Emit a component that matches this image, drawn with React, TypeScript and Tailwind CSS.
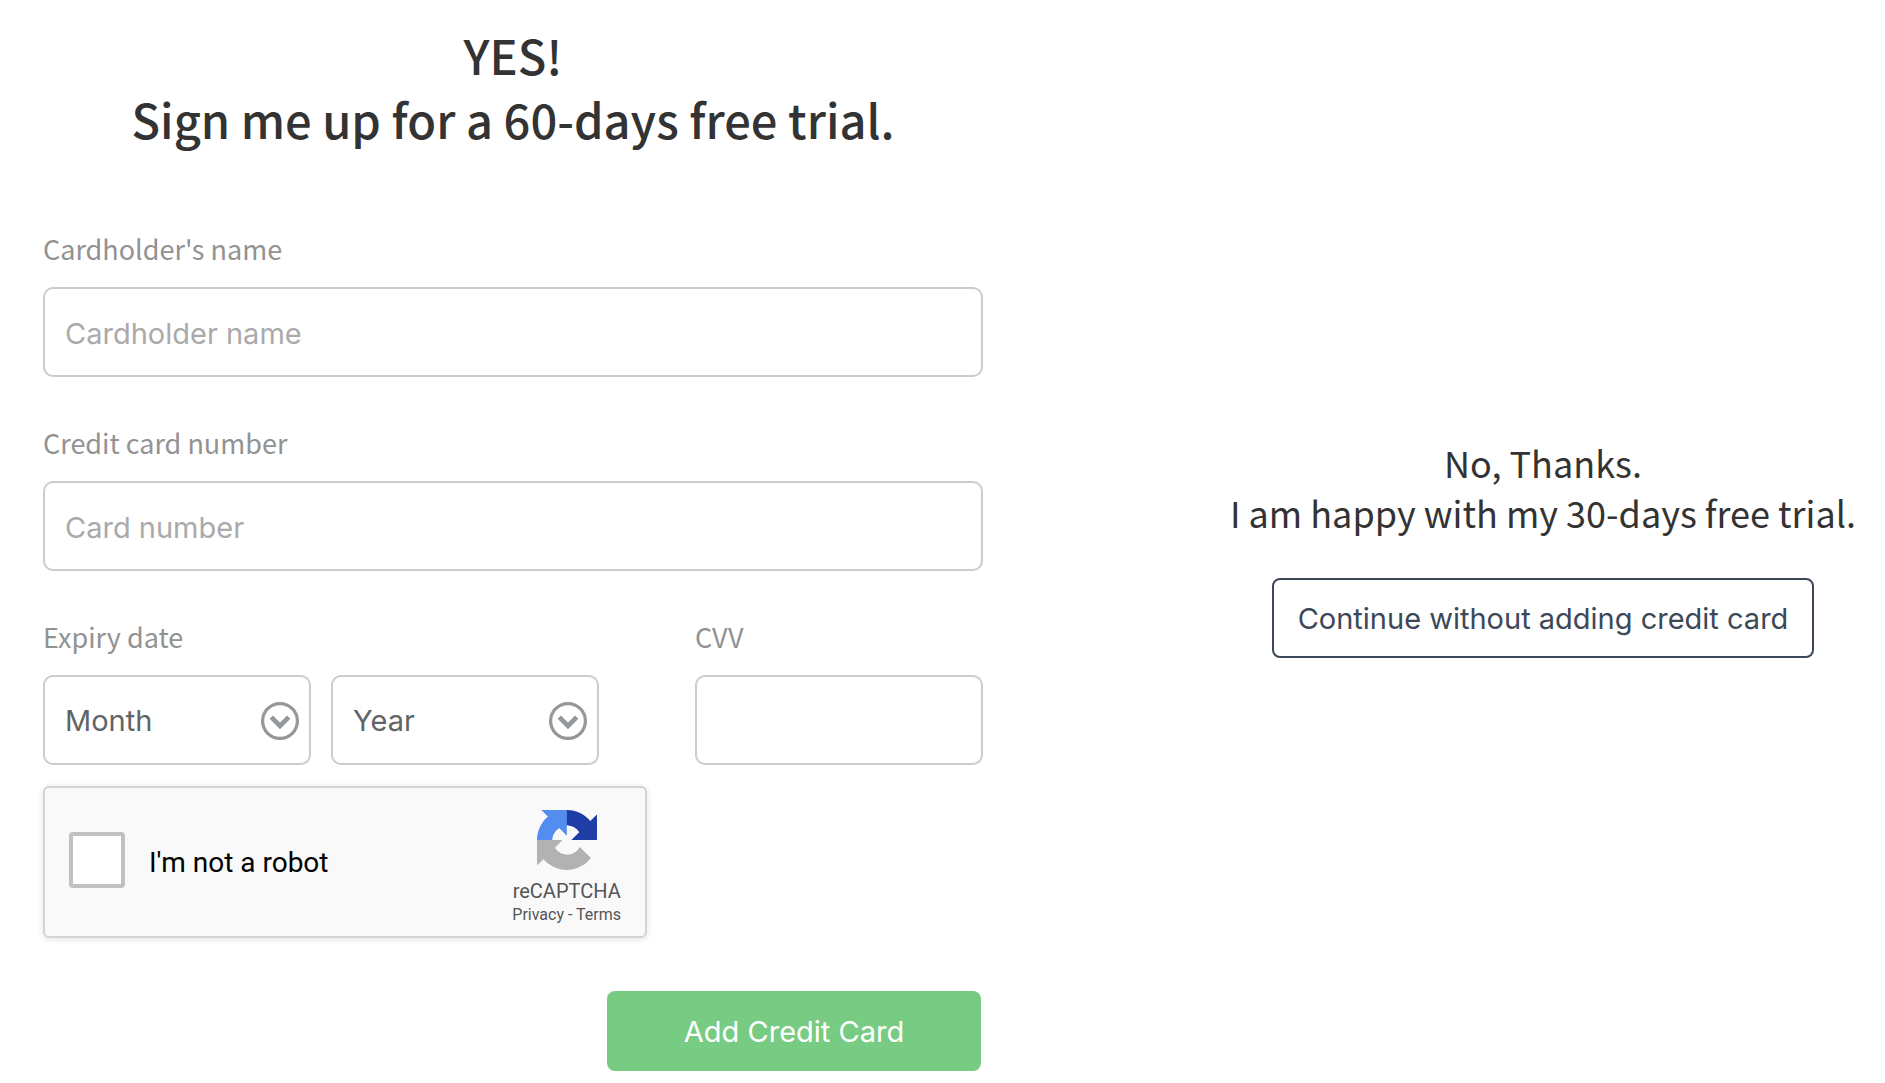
import type { ReactNode } from "react";

const humanist = "font-['Noto_Sans_CJK_SC',sans-serif]";
const fieldBox =
  "h-[90px] w-full rounded-[10px] border-2 border-[#cccccc] bg-white px-5 pt-0.5 text-[29px] outline-none placeholder:text-[#aaaaaa]";

function Field({ id, label, children }: { id: string; label: string; children: ReactNode }) {
  return (
    <div className="flex flex-col gap-[17px]">
      <label htmlFor={id} className={`${humanist} text-[27px] leading-[43px] text-[#929292]`}>
        {label}
      </label>
      {children}
    </div>
  );
}

function Dropdown({ id, label, options }: { id: string; label: string; options: string[] }) {
  return (
    <div className="relative flex-1">
      <select id={id} aria-label={label} className={`${fieldBox} appearance-none text-[#5f6467]`}>
        <option>{label}</option>
        {options.map((option) => (
          <option key={option}>{option}</option>
        ))}
      </select>
      <svg
        viewBox="0 0 38 38"
        className="pointer-events-none absolute top-[27px] right-3 size-[38px]"
        fill="none"
        stroke="#94989b"
        aria-hidden="true"
      >
        <circle cx="19" cy="19" r="17.4" strokeWidth="3.2" />
        <path d="M10.3 15.2 19 23.9l8.700-8.700" strokeWidth="4.600" />
      </svg>
    </div>
  );
}

function RecaptchaLogo() {
  return (
    <svg viewBox="0 0 64 64" className="size-[60px]" aria-hidden="true">
      <path
        fill="#1f3da6"
        d="M64 31.955l-.033-1.37V4.687l-7.16 7.16C50.948 4.674 42.033.093 32.05.093c-10.4 0-19.622 4.96-25.458 12.64l11.736 11.86a15.55 15.55 0 0 1 4.754-5.334c2.05-1.6 4.952-2.906 8.968-2.906.485 0 .86.057 1.135.163 4.976.393 9.288 3.14 11.828 7.124l-8.307 8.307L64 31.953"
      />
      <path
        fill="#548df0"
        d="M31.862.094l-1.37.033H4.594l7.16 7.16C4.58 13.147 0 22.06 0 32.046c0 10.4 4.96 19.622 12.64 25.458L24.5 45.768a15.55 15.55 0 0 1-5.334-4.754c-1.6-2.05-2.906-4.952-2.906-8.968 0-.485.057-.86.163-1.135.393-4.976 3.14-9.288 7.124-11.828l8.307 8.307L31.86.095"
      />
      <path
        fill="#b2b2b2"
        d="M.001 32.045l.033 1.37v25.898l7.16-7.16c5.86 7.173 14.774 11.754 24.76 11.754 10.4 0 19.622-4.96 25.458-12.64l-11.736-11.86a15.55 15.55 0 0 1-4.754 5.334c-2.05 1.6-4.952 2.906-8.968 2.906-.485 0-.86-.057-1.135-.163-4.976-.393-9.288-3.14-11.828-7.124l8.307-8.307c-10.522.04-22.4.066-27.295-.005"
      />
    </svg>
  );
}

function Recaptcha() {
  return (
    <div className="mt-[21px] flex h-[152px] w-[604px] items-center justify-between rounded-md border-2 border-[#d3d3d3] bg-[#f9f9f9] pr-6 pl-6 font-['Roboto',sans-serif] shadow-[0_1px_6px_rgba(0,0,0,0.12)]">
      <div className="flex items-center gap-6 pb-1">
        <input
          id="robot"
          type="checkbox"
          className="size-14 appearance-none rounded-[4px] border-4 border-[#c1c1c1] bg-white"
        />
        <label htmlFor="robot" className="pt-1.5 text-[28px] text-black">
          I'm not a robot
        </label>
      </div>
      <div className="flex flex-col items-center pt-3 text-[#555555]">
        <RecaptchaLogo />
        <div className="mt-2 text-[20px] leading-[26px]">reCAPTCHA</div>
        <div className="text-[16px] leading-[22px]">
          <a href="#privacy">Privacy</a> - <a href="#terms">Terms</a>
        </div>
      </div>
    </div>
  );
}

export default function App() {
  return (
    <main className="grid grid-cols-[3fr_2fr] gap-x-[175px] bg-white font-['Inter',sans-serif]">
      <form className="px-[43px] pt-[23px] pb-3" onSubmit={(event) => event.preventDefault()}>
        <h1 className={`${humanist} text-center text-[47px] leading-[64px] font-medium text-[#333333]`}>
          YES!
          <br />
          Sign me up for a 60-days free trial.
        </h1>
        <div className="mt-[76px] flex flex-col gap-11">
          <Field id="name" label="Cardholder's name">
            <input id="name" type="text" placeholder="Cardholder name" className={fieldBox} />
          </Field>
          <Field id="number" label="Credit card number">
            <input id="number" type="text" placeholder="Card number" className={fieldBox} />
          </Field>
          <div className="flex justify-between">
            <div className="w-[556px]">
              <Field id="month" label="Expiry date">
                <div className="flex gap-5">
                  <Dropdown id="month" label="Month" options={["01", "02", "03", "04", "05", "06", "07", "08", "09", "10", "11", "12"]} />
                  <Dropdown id="year" label="Year" options={["2024", "2025", "2026", "2027", "2028"]} />
                </div>
              </Field>
            </div>
            <div className="w-[288px]">
              <Field id="cvv" label="CVV">
                <input id="cvv" type="text" className={fieldBox} />
              </Field>
            </div>
          </div>
        </div>
        <Recaptcha />
        <div className="mt-[53px] flex justify-end pr-0.5">
          <button type="submit" className="h-20 w-[374px] rounded-lg bg-[#78cb82] pt-0.5 text-[29px] text-white">
            Add Credit Card
          </button>
        </div>
      </form>
      <section className="flex flex-col items-center pt-[437px]">
        <h2 className={`${humanist} text-center text-[36px] leading-[50px] whitespace-nowrap text-[#333333]`}>
          No, Thanks.
          <br />I am happy with my 30-days free trial.
        </h2>
        <button type="button" className="mt-[41px] h-20 w-[542px] rounded-lg border-2 border-[#3c4858] pt-0.5 text-[29px] whitespace-nowrap text-[#3c4858]">
          Continue without adding credit card
        </button>
      </section>
    </main>
  );
}
